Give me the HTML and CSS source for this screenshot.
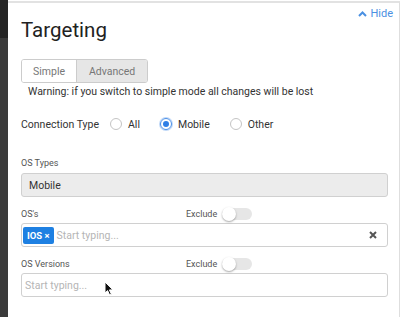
FILE: index.html
```html
<!DOCTYPE html>
<html>
<head>
    <meta charset="UTF-8">
    <title>Targeting</title>
    <link rel="stylesheet" href="styles.css">
</head>
<body>
    <div class="layout">
        <div class="sidebar">
            <div class="sidebar-top"></div>
        </div>
        <div class="panel">
            <div class="header">
                <h1>Targeting</h1>
                <a class="hide-link" href="#">
                    <svg width="9" height="6" viewBox="0 0 9 6"><polyline points="1,5 4.5,1.5 8,5" fill="none" stroke="#4a90e2" stroke-width="2"/></svg>
                    Hide
                </a>
            </div>

            <div class="mode-toggle">
                <button class="mode-btn">Simple</button>
                <button class="mode-btn active">Advanced</button>
            </div>
            <p class="warning">Warning: if you switch to simple mode all changes will be lost</p>

            <div class="connection-row">
                <span class="connection-label">Connection Type</span>
                <label class="radio-option"><span class="radio"></span>All</label>
                <label class="radio-option"><span class="radio checked"></span>Mobile</label>
                <label class="radio-option"><span class="radio"></span>Other</label>
            </div>

            <div class="field-label os-types-label">OS Types</div>
            <div class="text-field disabled">Mobile</div>

            <div class="label-row">
                <span class="field-label label-col">OS's</span>
                <span class="field-label">Exclude</span>
                <span class="switch"><span class="knob"></span></span>
            </div>
            <div class="text-field tag-field">
                <span class="tag">IOS <span class="tag-x">×</span></span>
                <span class="placeholder">Start typing...</span>
                <svg class="clear-icon" width="8" height="8" viewBox="0 0 8 8"><path d="M1 1 L7 7 M7 1 L1 7" stroke="#555" stroke-width="2"/></svg>
            </div>

            <div class="label-row">
                <span class="field-label label-col">OS Versions</span>
                <span class="field-label">Exclude</span>
                <span class="switch"><span class="knob"></span></span>
            </div>
            <div class="text-field plain-field">
                <span class="placeholder">Start typing...</span>
            </div>
        </div>
    </div>
    <svg class="cursor" width="10" height="15" viewBox="0 0 10 15"><path d="M1 1 L1 12 L3.6 9.6 L5.6 14 L7.4 13.2 L5.4 8.9 L9 8.9 Z" fill="#111" stroke="#fff" stroke-width="1"/></svg>
</body>
</html>
```

FILE: styles.css
```css
body {
    margin: 0;
    background-color: #fff;
    font-family: Roboto, "Liberation Sans", sans-serif;
    color: #333;
    font-size: 10.5px;
    width: 401px;
    height: 317px;
    overflow: hidden;
}

.layout {
    display: flex;
    height: 317px;
}

.sidebar {
    width: 8px;
    flex: none;
    background-color: #3b3b3b;
}

.sidebar-top {
    height: 38px;
    background-color: #252525;
}

.panel {
    flex: 1;
    margin-top: 1px;
    margin-right: 1px;
    border-top: 2px solid #e2e2e2;
    border-right: 1px solid #dedede;
    padding: 0 11px 0 13px;
}

.header {
    display: flex;
    justify-content: space-between;
    align-items: flex-start;
}

.header h1 {
    margin: 15px 0 0;
    font-size: 20.5px;
    line-height: 24px;
    font-weight: 400;
    color: #222;
}

.hide-link {
    margin-top: 4px;
    margin-right: -5px;
    font-size: 11px;
    line-height: 14px;
    color: #4a90e2;
    text-decoration: none;
    display: flex;
    align-items: center;
    gap: 3px;
}

.mode-toggle {
    display: inline-flex;
    margin-top: 17px;
    border: 1px solid #ccc;
    border-radius: 3px;
    overflow: hidden;
    height: 22px;
}

.mode-btn {
    border: none;
    background-color: #fff;
    color: #777;
    font-family: inherit;
    font-size: 10.5px;
    padding: 0 11px;
    margin: 0;
}

.mode-btn.active {
    background-color: #e6e6e6;
    border-left: 1px solid #ccc;
    padding: 0 12px;
}

.warning {
    margin: 2px 0 0;
    padding-left: 7px;
    line-height: 14px;
    color: #333;
}

.connection-row {
    display: flex;
    align-items: center;
    height: 16px;
    margin-top: 17px;
}

.connection-label {
    margin-right: 11px;
}

.radio-option {
    display: flex;
    align-items: center;
    margin-right: 20px;
}

.radio {
    width: 10px;
    height: 10px;
    border: 1px solid #c4c4c4;
    border-radius: 50%;
    margin-right: 6px;
    display: flex;
    align-items: center;
    justify-content: center;
}

.radio.checked {
    border-color: #4a8fe8;
    box-shadow: 0 0 0 1px rgba(74, 143, 232, 0.35);
}

.radio.checked::after {
    content: "";
    width: 6px;
    height: 6px;
    border-radius: 50%;
    background-color: #2f7fe6;
}

.field-label {
    font-size: 9px;
    line-height: 12px;
    color: #555;
}

.os-types-label {
    margin-top: 25px;
    margin-bottom: 4px;
}

.text-field {
    height: 22px;
    border: 1px solid #d0d0d0;
    border-radius: 3px;
    display: flex;
    align-items: center;
    box-sizing: content-box;
}

.text-field.disabled {
    background-color: #ececec;
    padding-left: 7px;
    color: #333;
}

.label-row {
    display: flex;
    align-items: center;
    height: 14px;
    margin-top: 10px;
    margin-bottom: 2px;
}

.label-col {
    width: 165px;
}

.switch {
    width: 30px;
    height: 12px;
    border-radius: 6px;
    background-color: #e6e6e6;
    margin-left: 5px;
    display: flex;
    align-items: center;
}

.knob {
    width: 14px;
    height: 14px;
    border-radius: 50%;
    background-color: #fff;
    box-shadow: 0 1px 2px rgba(0, 0, 0, 0.35);
}

.tag-field {
    padding: 0 10px 0 1px;
}

.tag {
    background-color: #1e80e2;
    color: #fff;
    font-weight: 700;
    font-size: 9.5px;
    line-height: 17px;
    padding: 0 4px;
    border-radius: 2px;
    margin-right: 3px;
}

.placeholder {
    color: #b5b5b5;
}

.clear-icon {
    margin-left: auto;
}

.plain-field {
    padding-left: 3px;
}

.cursor {
    position: absolute;
    left: 104px;
    top: 281px;
}
```
